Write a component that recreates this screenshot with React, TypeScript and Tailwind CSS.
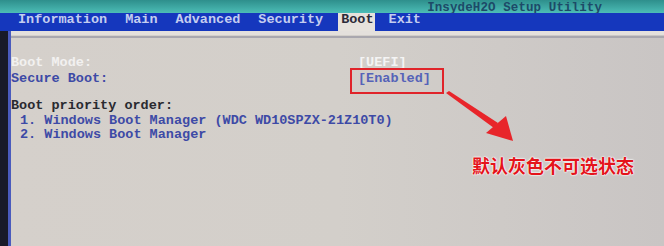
const mono = "font-['Liberation_Mono',monospace] font-bold";

const tabs = ['Information', 'Main', 'Advanced', 'Security', 'Boot', 'Exit'];

function Arrow() {
  return (
    <svg className="absolute left-0 top-0 pointer-events-none" width="664" height="246" viewBox="0 0 664 246">
      <path d="M446 93 L449 91 L498 123 L494 128 Z" fill="#e8252a" />
      <path d="M486 133 L506 116 L513 141 Z" fill="#e8252a" />
    </svg>
  );
}

export default function App() {
  return (
    <div className="relative w-[664px] h-[246px] overflow-hidden flex flex-col bg-[#cfcac6]">
      <div className="h-[13px] bg-gradient-to-b from-[#2e8f8c] to-[#4cbdb6] flex justify-end pr-[62px]">
        <span className={`${mono} text-[12.5px] leading-[17px] text-[#1d4a68] tracking-[0.1px]`}>InsydeH2O Setup Utility</span>
      </div>
      <div className={`h-[18px] bg-[#1537bd] flex items-start pl-[18px] ${mono} text-[13.5px] leading-[14px] text-[#c4cdf0]`}>
        {tabs.map((t) =>
          t === 'Boot' ? (
            <span key={t} className="bg-[#e6e2dc] text-[#2b2b38] h-full pl-[3px] pr-[1px] mr-[14px] -ml-[3px]">Boot</span>
          ) : (
            <span key={t} className="mr-[18px]">{t}</span>
          )
        )}
      </div>
      <div className="flex flex-1">
        <div className="w-[8px] bg-[#181a28]" />
        <div className="w-[3px] bg-[#4a5bbd]" />
        <div className="flex-1 flex flex-col bg-gradient-to-r from-[#d5d0cb] via-[#d3cfca] to-[#c9c5c4]">
          <div className="h-[4px] bg-[#e4e0dc]" />
          <div className="h-[2px] bg-[#a9a7ae] mt-[1px]" />
          <div className={`${mono} text-[13.5px] leading-[14.5px] pt-[18px]`}>
            <div className="flex">
              <span className="w-[347px] text-[#f2f1f0]">Boot Mode:</span>
              <span className="text-[#f4f4f4]">[UEFI]</span>
            </div>
            <div className="flex pt-[1px]">
              <span className="w-[347px] text-[#3d4aa6]">Secure Boot:</span>
              <span className="relative text-[#5563b8]">
                [Enabled]
                <span className="absolute -left-[8px] -right-[13px] -top-[4px] -bottom-[8px] border-2 border-[#e0242a]" />
              </span>
            </div>
            <div className="h-[13px]" />
            <div className="text-[#2a2a30]">Boot priority order:</div>
            <div className="pl-[9px] text-[#3d4aa6] whitespace-pre">1. Windows Boot Manager (WDC WD10SPZX-21Z10T0)</div>
            <div className="pl-[9px] text-[#3d4aa6] whitespace-pre">2. Windows Boot Manager</div>
          </div>
        </div>
      </div>
      <Arrow />
      <div className="absolute left-[472px] top-[153px] font-['Noto_Sans_CJK_SC',sans-serif] font-bold text-[18px] leading-[24px] text-[#e4141b] [text-shadow:0_0_2px_#fff,0_0_2px_#fff,0_0_1px_#fff]">
        默认灰色不可选状态
      </div>
    </div>
  );
}
